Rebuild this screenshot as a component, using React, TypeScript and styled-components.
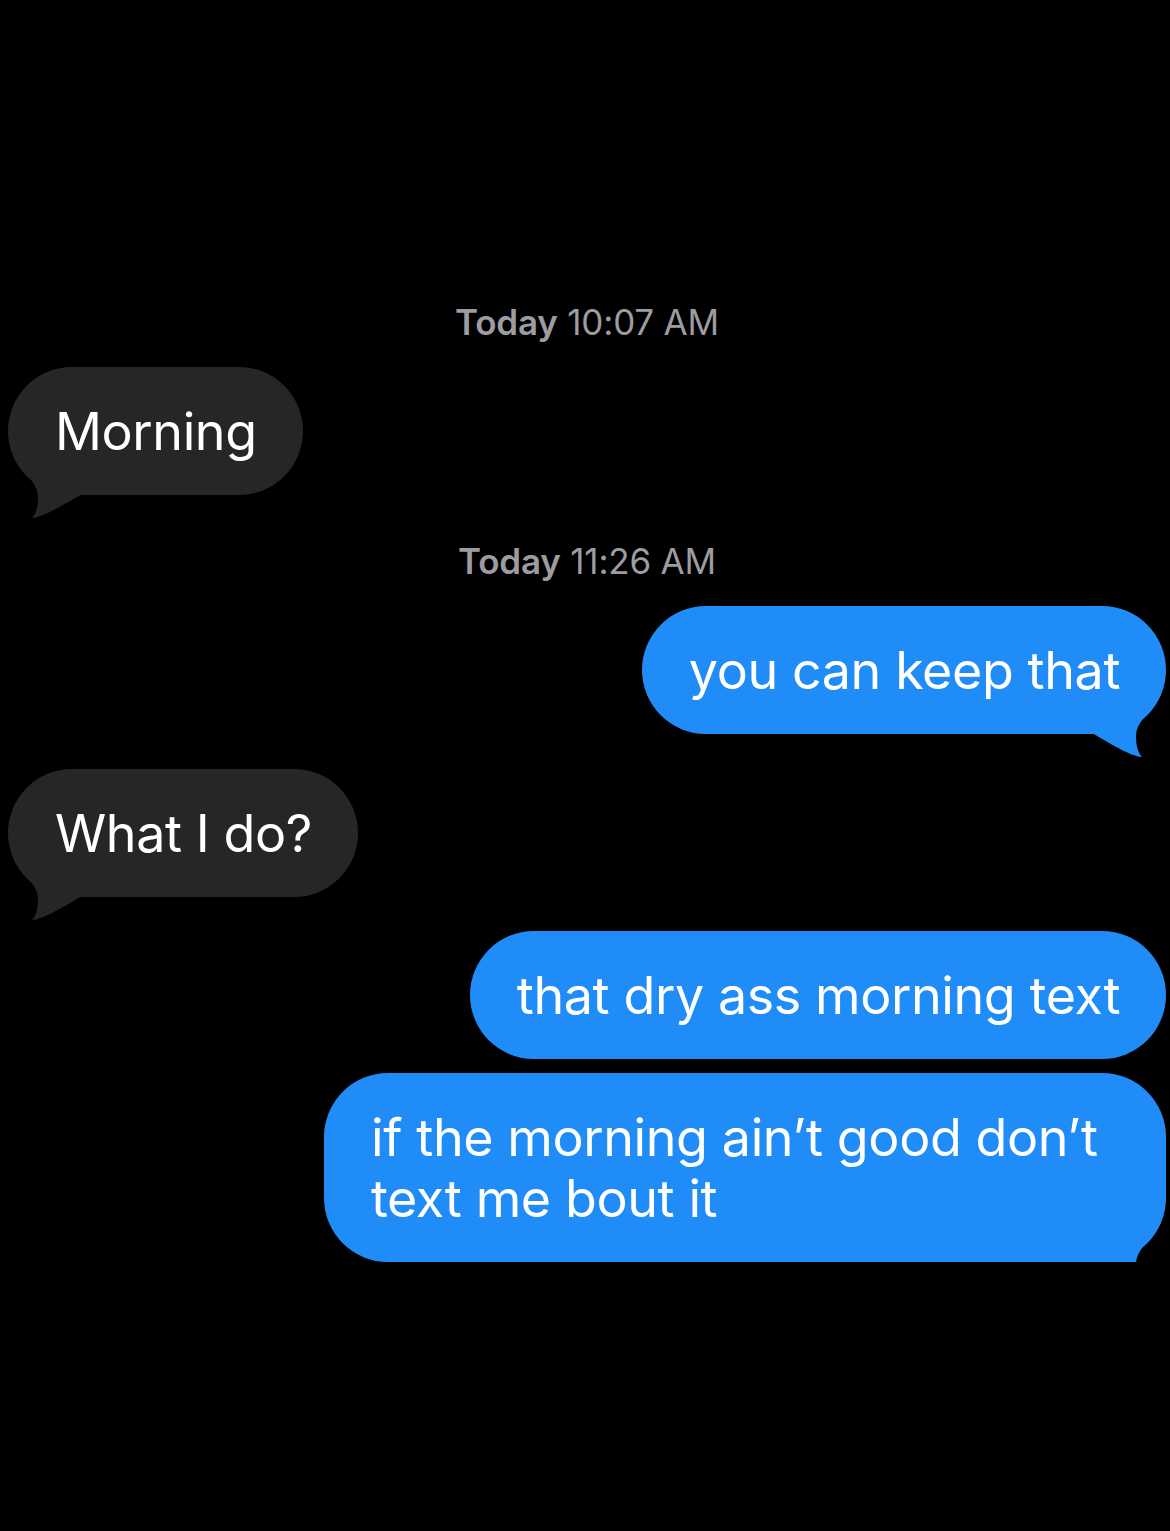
import React from "react";
import styled, { createGlobalStyle } from "styled-components";

const GlobalStyle = createGlobalStyle`
  html, body {
    margin: 0;
    padding: 0;
    background: #000;
  }
  body {
    font-family: Inter, "Noto Sans", "Liberation Sans", sans-serif;
    -webkit-font-smoothing: antialiased;
  }
`;

const GRAY = "#262628";
const BLUE = "#1f8cf7";

const Thread = styled.main`
  min-height: 1531px;
  background: #000;
  display: flex;
  flex-direction: column;
  padding: 303px 4px 0 8px;
  box-sizing: border-box;
`;

const Stamp = styled.div<{ $top?: number }>`
  margin-top: ${(p) => p.$top ?? 0}px;
  text-align: center;
  color: #9c9ca1;
  font-size: 35px;
  line-height: 38px;
  letter-spacing: -0.2px;
  b {
    font-weight: 600;
  }
`;

const Row = styled.div<{ $mine?: boolean; $top?: number }>`
  display: flex;
  justify-content: ${(p) => (p.$mine ? "flex-end" : "flex-start")};
  margin-top: ${(p) => p.$top ?? 0}px;
`;

const Bubble = styled.div<{ $mine?: boolean }>`
  position: relative;
  max-width: 842px;
  box-sizing: border-box;
  padding: 34px 46px 33px 47px;
  border-radius: 64px;
  background: ${(p) => (p.$mine ? BLUE : GRAY)};
  color: #fff;
  font-size: 52px;
  line-height: 61px;
  letter-spacing: -0.4px;
`;

const TailSvg = styled.svg<{ $mine?: boolean }>`
  position: absolute;
  bottom: 0;
  ${(p) => (p.$mine ? "right: 0; transform: scaleX(-1);" : "left: 0;")}
  transform-origin: center;
  overflow: hidden;
  pointer-events: none;
  display: block;
`;

/* Curved horn that hangs from a bubble's lower corner; `cut` keeps only the
   part above the bubble's bottom edge. */
function Tail({ mine, cut }: { mine?: boolean; cut?: boolean }) {
  const h = cut ? 40 : 64;
  return (
    <TailSvg
      $mine={mine}
      width={80}
      height={h}
      viewBox={`0 -40 80 ${h}`}
      style={{ marginBottom: cut ? 0 : -(h - 40) }}
    >
      <path
        d="M10 -32 C20 -18 30 -10 30 2 C30 12 28 19 24 23 C36 22 55 10 74 -1 L74 -32 Z"
        fill={mine ? BLUE : GRAY}
      />
    </TailSvg>
  );
}

type Msg =
  | { kind: "stamp"; day: string; time: string; top: number }
  | { kind: "msg"; mine: boolean; text: string; top: number; tail?: "full" | "cut" };

const thread: Msg[] = [
  { kind: "stamp", day: "Today", time: "10:07 AM", top: 0 },
  { kind: "msg", mine: false, text: "Morning", top: 26, tail: "full" },
  { kind: "stamp", day: "Today", time: "11:26 AM", top: 47 },
  { kind: "msg", mine: true, text: "you can keep that", top: 26, tail: "full" },
  { kind: "msg", mine: false, text: "What I do?", top: 35, tail: "full" },
  { kind: "msg", mine: true, text: "that dry ass morning text", top: 34 },
  {
    kind: "msg",
    mine: true,
    text: "if the morning ain’t good don’t text me bout it",
    top: 14,
    tail: "cut",
  },
];

export default function App() {
  return (
    <>
      <GlobalStyle />
      <Thread>
        {thread.map((m, i) =>
          m.kind === "stamp" ? (
            <Stamp key={i} $top={m.top}>
              <b>{m.day}</b> {m.time}
            </Stamp>
          ) : (
            <Row key={i} $mine={m.mine} $top={m.top}>
              <Bubble $mine={m.mine}>
                {m.text}
                {m.tail && <Tail mine={m.mine} cut={m.tail === "cut"} />}
              </Bubble>
            </Row>
          )
        )}
      </Thread>
    </>
  );
}
